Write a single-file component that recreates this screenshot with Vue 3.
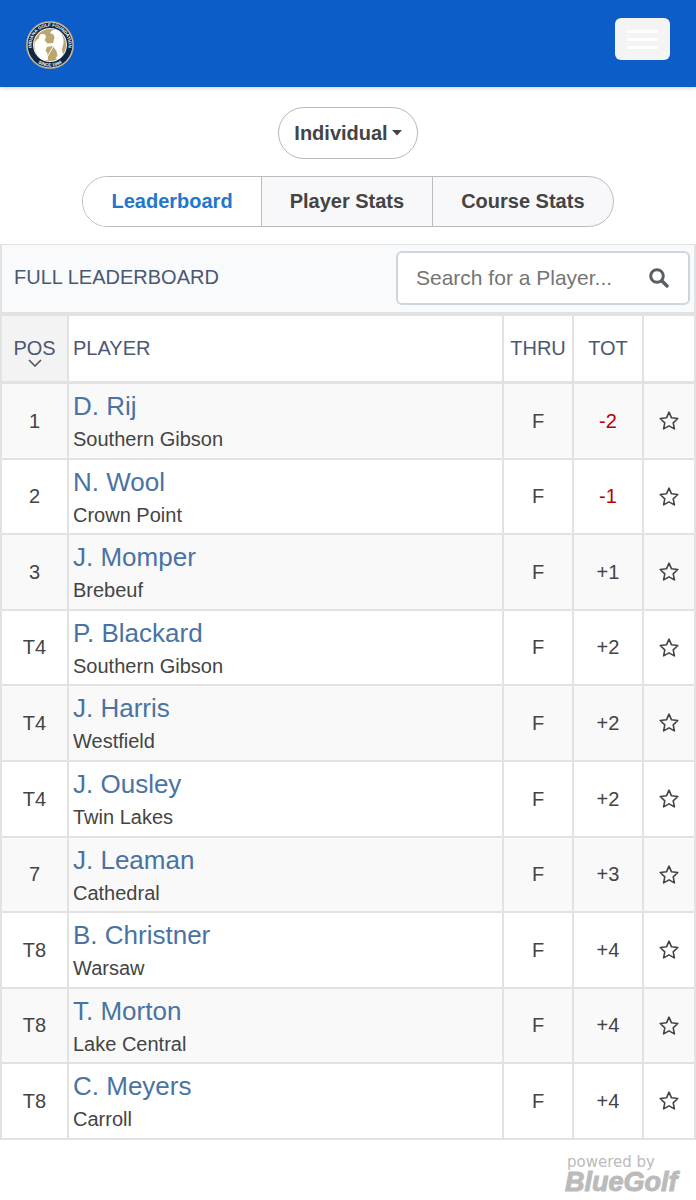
<script setup>
import { ref, computed } from 'vue'

const tabs = ['Leaderboard', 'Player Stats', 'Course Stats']
const activeTab = ref('Leaderboard')
const search = ref('')
const starred = ref([])

const players = [
  { pos: '1', name: 'D. Rij', school: 'Southern Gibson', thru: 'F', total: '-2' },
  { pos: '2', name: 'N. Wool', school: 'Crown Point', thru: 'F', total: '-1' },
  { pos: '3', name: 'J. Momper', school: 'Brebeuf', thru: 'F', total: '+1' },
  { pos: 'T4', name: 'P. Blackard', school: 'Southern Gibson', thru: 'F', total: '+2' },
  { pos: 'T4', name: 'J. Harris', school: 'Westfield', thru: 'F', total: '+2' },
  { pos: 'T4', name: 'J. Ousley', school: 'Twin Lakes', thru: 'F', total: '+2' },
  { pos: '7', name: 'J. Leaman', school: 'Cathedral', thru: 'F', total: '+3' },
  { pos: 'T8', name: 'B. Christner', school: 'Warsaw', thru: 'F', total: '+4' },
  { pos: 'T8', name: 'T. Morton', school: 'Lake Central', thru: 'F', total: '+4' },
  { pos: 'T8', name: 'C. Meyers', school: 'Carroll', thru: 'F', total: '+4' }
]

const visible = computed(() =>
  players.filter((p) => p.name.toLowerCase().includes(search.value.trim().toLowerCase()))
)

function toggleStar(name) {
  starred.value = starred.value.includes(name)
    ? starred.value.filter((n) => n !== name)
    : [...starred.value, name]
}
</script>

<template>
  <div class="page">
    <header class="topbar">
      <a href="#" class="logo" aria-label="Indiana Golf Foundation">
        <svg viewBox="0 0 100 100" width="50" height="50">
          <defs>
            <path id="ring-top" d="M15 62a37 37 0 1 1 70 0" />
            <path id="ring-bottom" d="M7 50a43 43 0 0 0 86 0" />
          </defs>
          <circle cx="50" cy="50" r="48" fill="#b9a67a" />
          <circle cx="50" cy="50" r="46" fill="#eee9dc" />
          <circle cx="50" cy="50" r="45" fill="#0d2745" />
          <circle cx="50" cy="50" r="34" fill="#f3efe5" />
          <circle cx="50" cy="50" r="32" fill="#bda56f" />
          <path fill="#fff" d="M19 46c2-4 5-7 9-9-1-6 3-10 8-9 5 0 7 5 5 9l-2 3 6 7 14-1 1 5-16 3-3 7 4 6 1 13-11 0c-10-6-17-18-16-34z" />
          <path fill="#fff" d="M53 22c5-4 14-3 17 3 6 6 9 16 6 26l-2 7 2 12-11 9-4-3 4-4-2-10-7-9 1-10 2-8-2-6-7-3z" />
          <path d="M58 50 41 80" stroke="#fff" stroke-width="2" />
          <text class="ring-text"><textPath href="#ring-top" startOffset="50%" text-anchor="middle">INDIANA GOLF FOUNDATION</textPath></text>
          <text class="ring-text"><textPath href="#ring-bottom" startOffset="50%" text-anchor="middle">SINCE 1994</textPath></text>
        </svg>
      </a>
      <button class="menu" type="button" aria-label="Menu"><span></span><span></span><span></span></button>
    </header>

    <div class="controls">
      <button class="division" type="button" aria-haspopup="listbox">
        Individual
        <svg width="10" height="6" viewBox="0 0 10 6"><path d="M0 0h10L5 5.5z" fill="currentColor" /></svg>
      </button>
      <nav class="tabs">
        <button
          v-for="tab in tabs"
          :key="tab"
          type="button"
          :class="{ active: tab === activeTab }"
          @click="activeTab = tab"
        >{{ tab }}</button>
      </nav>
    </div>

    <section class="board">
      <div class="board-head">
        <h1>FULL LEADERBOARD</h1>
        <form class="search" @submit.prevent>
          <input v-model="search" type="text" placeholder="Search for a Player..." aria-label="Search for a Player" />
          <button type="submit" aria-label="Search">
            <svg width="20" height="20" viewBox="0 0 20 20" fill="none" stroke="currentColor">
              <circle cx="8" cy="8" r="6.3" stroke-width="3" />
              <path d="m13 13 5 5" stroke-width="3.4" stroke-linecap="round" />
            </svg>
          </button>
        </form>
      </div>

      <table>
        <colgroup>
          <col class="c-pos" /><col /><col class="c-num" /><col class="c-num" /><col class="c-star" />
        </colgroup>
        <thead>
          <tr>
            <th class="sorted" scope="col">
              <span class="sort">POS
                <svg width="14" height="8" viewBox="0 0 14 8"><path d="m1 1 6 6 6-6" fill="none" stroke="#555" stroke-width="1.6" /></svg>
              </span>
            </th>
            <th class="left" scope="col">PLAYER</th>
            <th scope="col">THRU</th>
            <th scope="col">TOT</th>
            <td></td>
          </tr>
        </thead>
        <tbody>
          <tr v-for="p in visible" :key="p.name">
            <td>{{ p.pos }}</td>
            <td class="player">
              <a href="#">{{ p.name }}</a>
              <div class="school">{{ p.school }}</div>
            </td>
            <td>{{ p.thru }}</td>
            <td :class="{ under: p.total.startsWith('-') }">{{ p.total }}</td>
            <td>
              <button
                class="star"
                type="button"
                :aria-label="'Follow ' + p.name"
                :aria-pressed="starred.includes(p.name)"
                @click="toggleStar(p.name)"
              >
                <svg width="20" height="20" viewBox="0 0 20 20">
                  <path
                    d="m10 1.200 2.500 5.600 6.300.7-4.600 4.300 1.200 6.100-5.400-3-5.400 3 1.200-6.100L1.200 7.500l6.300-.7z"
                    :fill="starred.includes(p.name) ? 'currentColor' : 'none'"
                    stroke="currentColor"
                    stroke-width="1.6"
                    stroke-linejoin="round"
                  />
                </svg>
              </button>
            </td>
          </tr>
        </tbody>
      </table>
    </section>

    <footer>
      <a href="#" class="powered">
        <span class="by">powered by</span>
        <span class="brand">BlueGolf</span>
      </a>
    </footer>
  </div>
</template>

<style>
body {
  background: #fff;
}
</style>

<style scoped>
.page {
  font-family: "Liberation Sans", Arial, sans-serif;
  font-size: 20px;
  color: #444;
}
button {
  font: inherit;
  color: inherit;
  cursor: pointer;
  padding: 0;
}
svg {
  display: block;
}
.topbar {
  display: flex;
  justify-content: space-between;
  align-items: flex-start;
  box-sizing: border-box;
  height: 87px;
  padding: 18px 26px 0 25px;
  background: #0c5dc8;
  box-shadow: 0 1px 4px rgba(0, 0, 0, 0.2);
}
.logo {
  padding-top: 2px;
}
.ring-text {
  font-size: 9px;
  font-weight: bold;
  fill: #fff;
}
.menu {
  display: flex;
  flex-direction: column;
  justify-content: center;
  align-items: center;
  gap: 5px;
  width: 55px;
  height: 42px;
  border: 0;
  border-radius: 6px;
  background: #f4f4f4;
}
.menu span {
  width: 31px;
  height: 3px;
  border-radius: 1px;
  background: #fff;
}
.controls {
  display: flex;
  flex-direction: column;
  align-items: center;
  gap: 17px;
  padding: 20px 0 17px;
  font-weight: bold;
}
.division {
  display: flex;
  align-items: center;
  justify-content: center;
  gap: 4px;
  width: 140px;
  height: 52px;
  border: 1px solid #b8b8b8;
  border-radius: 26px;
  background: #fff;
}
.tabs {
  display: flex;
  height: 49px;
  overflow: hidden;
  border: 1px solid #bcbcbc;
  border-radius: 26px;
  background: #f8f8fb;
}
.tabs button {
  padding: 0 28px;
  border: 0;
  border-left: 1px solid #bcbcbc;
  background: transparent;
}
.tabs button:first-child {
  border-left: 0;
}
.tabs .active {
  color: #2277cc;
  background: #fff;
}
.board-head {
  display: flex;
  align-items: center;
  justify-content: space-between;
  box-sizing: border-box;
  height: 72px;
  padding: 0 4px 2px 12px;
  border: 1px solid #e2e2e2;
  border-width: 1px 2px 4px;
  background: #f8fafc;
}
h1 {
  margin: 0;
  font-size: 20px;
  font-weight: normal;
  color: #4b5871;
}
.search {
  display: flex;
  box-sizing: border-box;
  width: 294px;
  height: 54px;
  border: 2px solid #cfd5dc;
  border-radius: 6px;
  background: #fff;
}
.search input {
  flex: 1;
  min-width: 0;
  padding: 0 0 0 18px;
  border: 0;
  outline: 0;
  background: transparent;
  font: inherit;
  font-size: 21px;
  color: #444;
}
.search input::placeholder {
  color: #757575;
  opacity: 1;
}
.search button {
  display: flex;
  align-items: center;
  justify-content: center;
  width: 58px;
  border: 0;
  background: transparent;
  color: #5a5f63;
}
table {
  width: 100%;
  table-layout: fixed;
  border-collapse: separate;
  border-spacing: 0;
  border-left: 2px solid #e2e2e2;
}
.c-pos {
  width: 67px;
}
.c-num {
  width: 70px;
}
.c-star {
  width: 52px;
}
th,
td {
  box-sizing: border-box;
  padding: 0;
  border-right: 2px solid #e2e2e2;
  border-bottom: 2px solid #e2e2e2;
  text-align: center;
  vertical-align: middle;
}
thead th,
thead td {
  height: 68px;
  border-bottom-width: 3px;
  font-weight: normal;
  color: #4b5871;
}
.sorted {
  background: #f3f3f3;
}
.sort {
  position: relative;
}
.sort svg {
  position: absolute;
  left: 50%;
  top: 100%;
  margin-left: -7px;
}
thead .left {
  padding-left: 4px;
  text-align: left;
}
tbody tr {
  height: 76px;
}
tbody tr:nth-child(5n + 2),
tbody tr:nth-child(5n + 4) {
  height: 75px;
}
tbody tr:nth-child(odd) {
  background: #f9f9f9;
}
.player {
  padding: 6px 4px 0;
  text-align: left;
  vertical-align: top;
}
.player a {
  display: block;
  font-size: 26px;
  line-height: 32px;
  color: #4973a3;
  text-decoration: none;
}
.school {
  line-height: 34px;
}
.under {
  color: #b80000;
}
.star {
  display: block;
  margin: 0 auto;
  border: 0;
  background: transparent;
}
footer {
  display: flex;
  justify-content: flex-end;
  padding: 13px 16px 0;
}
.powered {
  display: flex;
  flex-direction: column;
  width: 115px;
  color: #bbb;
  text-decoration: none;
}
.by {
  padding-left: 2px;
  font-family: "DejaVu Sans", sans-serif;
  font-size: 15px;
  line-height: 18px;
}
.brand {
  font-size: 27px;
  font-weight: bold;
  font-style: italic;
  line-height: 22px;
  -webkit-text-stroke: 1px #bbb;
}
</style>
